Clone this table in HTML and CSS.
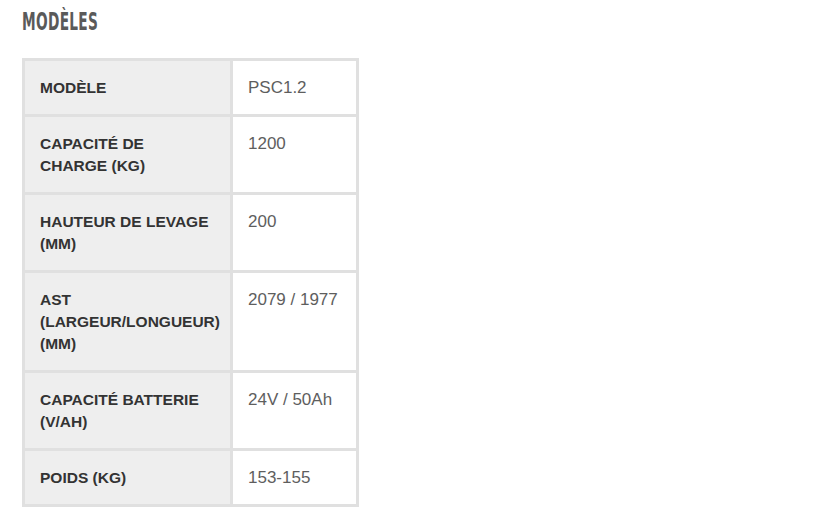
FILE: index.html
```html
<!DOCTYPE html>
<html lang="fr">
<head>
<meta charset="utf-8">
<title>Modèles</title>
<link rel="stylesheet" href="styles.css">
</head>
<body>
<section class="specs">
  <h2 class="specs-title"><span class="specs-title-text">MODÈLES</span></h2>
  <table class="spec-table">
    <tbody>
      <tr><th>MODÈLE</th><td>PSC1.2</td></tr>
      <tr><th>CAPACITÉ DE<br>CHARGE (KG)</th><td>1200</td></tr>
      <tr><th>HAUTEUR DE LEVAGE<br>(MM)</th><td>200</td></tr>
      <tr><th>AST<br>(LARGEUR/LONGUEUR)<br>(MM)</th><td>2079 / 1977</td></tr>
      <tr><th>CAPACITÉ BATTERIE<br>(V/AH)</th><td>24V / 50Ah</td></tr>
      <tr><th>POIDS (KG)</th><td>153-155</td></tr>
    </tbody>
  </table>
</section>
</body>
</html>
```
FILE: styles.css
```css
html, body {
  margin: 0;
  padding: 0;
  background: #ffffff;
}
body {
  font-family: "Liberation Sans", Arial, sans-serif;
}
.specs {
  padding: 6px 0 0 22px;
}
.specs-title {
  margin: 0;
  height: 30px;
  line-height: 32px;
  font-family: "DejaVu Sans Condensed", "DejaVu Sans", sans-serif;
  font-weight: bold;
  font-size: 25px;
  color: #5a5a5a;
}
.specs-title-text {
  display: inline-block;
  transform: scaleX(0.61);
  transform-origin: left center;
  letter-spacing: 0.5px;
}
.spec-table {
  margin-top: 22px;
  border-collapse: collapse;
  border: 2px solid #d2d2d2;
}
.spec-table th,
.spec-table td {
  border: 3px solid #e0e0e0;
  padding: 16px 15px 15px 15px;
  vertical-align: top;
  text-align: left;
  line-height: 22px;
}
.spec-table th {
  width: 176px;
  padding-right: 10px;
  background: #eeeeee;
  color: #333333;
  font-size: 15.5px;
  font-weight: bold;
}
.spec-table td {
  width: 93px;
  background: #ffffff;
  color: #5e5e5e;
  font-size: 17px;
}
```
